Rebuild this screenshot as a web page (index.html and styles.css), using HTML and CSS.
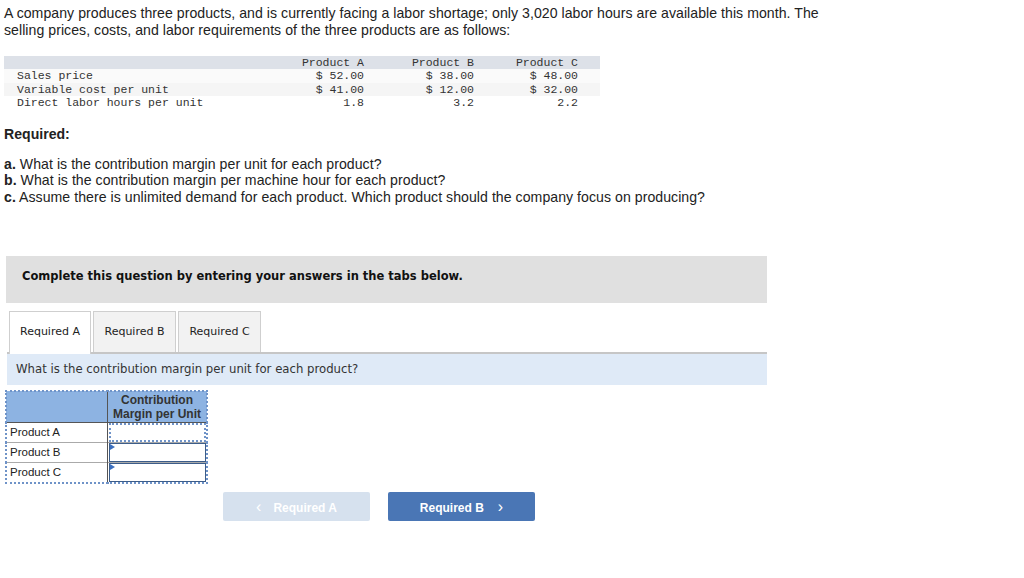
FILE: index.html
```html
<!DOCTYPE html>
<html>
<head>
<meta charset="utf-8">
<link rel="stylesheet" href="styles.css">
</head>
<body>
<p class="intro">A company produces three products, and is currently facing a labor shortage; only 3,020 labor hours are available this month. The selling prices, costs, and labor requirements of the three products are as follows:</p>

<table class="data">
  <thead>
    <tr><th class="lbl"></th><th class="ca">Product A</th><th class="cb">Product B</th><th class="cc">Product C</th></tr>
  </thead>
  <tbody>
    <tr><td class="lbl">Sales price</td><td class="ca">$ 52.00</td><td class="cb">$ 38.00</td><td class="cc">$ 48.00</td></tr>
    <tr><td class="lbl">Variable cost per unit</td><td class="ca">$ 41.00</td><td class="cb">$ 12.00</td><td class="cc">$ 32.00</td></tr>
    <tr><td class="lbl">Direct labor hours per unit</td><td class="ca">1.8</td><td class="cb">3.2</td><td class="cc">2.2</td></tr>
  </tbody>
</table>

<p class="req-title">Required:</p>
<div class="req-list">
  <p><b>a.</b> What is the contribution margin per unit for each product?</p>
  <p><b>b.</b> What is the contribution margin per machine hour for each product?</p>
  <p><b>c.</b> Assume there is unlimited demand for each product. Which product should the company focus on producing?</p>
</div>

<div class="instr">Complete this question by entering your answers in the tabs below.</div>

<div class="tabs">
  <div class="tab active">Required A</div>
  <div class="tab">Required B</div>
  <div class="tab">Required C</div>
</div>
<div class="question">What is the contribution margin per unit for each product?</div>

<table class="answer">
  <thead>
    <tr><th class="a-lbl"></th><th class="a-val">Contribution Margin per Unit</th></tr>
  </thead>
  <tbody>
    <tr><td class="a-lbl">Product A</td><td class="a-val"><div class="inp focus"></div></td></tr>
    <tr><td class="a-lbl">Product B</td><td class="a-val"><div class="inp"><span class="flag"></span></div></td></tr>
    <tr><td class="a-lbl">Product C</td><td class="a-val"><div class="inp"><span class="flag"></span></div></td></tr>
  </tbody>
</table>

<div class="nav">
  <div class="btn prev"><span class="chev">&lsaquo;</span>Required A</div>
  <div class="btn next">Required B<span class="chev right">&rsaquo;</span></div>
</div>
</body>
</html>
```

FILE: styles.css
```css
html, body {
  margin: 0;
  padding: 0;
  background: #fff;
}
body {
  padding: 0 4px;
  font-family: "Liberation Sans", Arial, sans-serif;
  color: #222;
}
p { margin: 0; }

.intro {
  font-size: 14.1px;
  letter-spacing: 0.05px;
  line-height: 16.5px;
  padding-top: 5px;
  width: 820px;
  color: #222;
}

.data {
  margin-top: 18px;
  border-collapse: collapse;
  font-family: "Liberation Mono", "Courier New", monospace;
  font-size: 11.5px;
  color: #333;
}
.data th, .data td {
  padding: 0;
  font-weight: normal;
  line-height: 13.4px;
  height: 13.4px;
}
.data thead tr { background: #dde1e8; }
.data tbody tr:nth-child(2) { background: #f5f5f5; }
.data tbody tr:nth-child(1) { background: #fafafa; }
.data .lbl { width: 273px; text-align: left; padding-left: 13px; }
.data .ca { width: 74px; text-align: right; padding-right: 11px; }
.data .cb { width: 99px; text-align: right; padding-right: 11px; }
.data .cc { width: 93px; text-align: right; padding-right: 22px; }

.req-title {
  margin-top: 16px;
  font-size: 14.1px;
  font-weight: bold;
  line-height: 16px;
}
.req-list {
  margin-top: 14px;
  font-size: 14.1px;
  letter-spacing: 0.05px;
  line-height: 16.5px;
}

.instr {
  margin: 51px 0 0 2px;
  width: 745px;
  height: 47px;
  padding-left: 16px;
  background: #e0e0e0;
  font-family: Verdana, "DejaVu Sans", sans-serif;
  font-weight: bold;
  font-size: 11.5px;
  line-height: 40px;
  color: #111;
}

.tabs {
  display: flex;
  gap: 2px;
  margin: 8px 0 0 5px;
  height: 41px;
  position: relative;
}
.tab {
  box-sizing: border-box;
  height: 41px;
  width: 83px;
  border: 1px solid #cfcfcf;
  border-bottom: none;
  background: #f2f2f2;
  font-family: Verdana, "DejaVu Sans", sans-serif;
  font-size: 11px;
  color: #222;
  text-align: center;
  line-height: 40px;
}
.tab.active {
  width: 82px;
  background: #fff;
  height: 43px;
  position: relative;
  z-index: 1;
}

.question {
  margin-left: 3px;
  width: 751px;
  border-top: 2px solid #c6c6c6;
  height: 31px;
  padding-left: 9px;
  background: #dfeaf7;
  font-family: Verdana, "DejaVu Sans", sans-serif;
  font-size: 11.7px;
  line-height: 31px;
  color: #333;
}

.answer {
  margin: 5px 0 0 1px;
  border-collapse: collapse;
  border: 2px dotted #6f93c8;
  font-family: "Liberation Sans", Arial, sans-serif;
  font-size: 11.5px;
  color: #222;
}
.answer th {
  background: #8db3e2;
  height: 30px;
  padding: 0;
  font-weight: bold;
  font-size: 12px;
  line-height: 14px;
  color: #333;
  border-bottom: 1px solid #555;
}
.answer th.a-lbl { border-right: 1px solid #555; }
.answer td {
  height: 19px;
  padding: 0;
  border-top: 1px solid #aaa;
}
.answer td.a-lbl {
  width: 97px;
  padding-left: 3px;
  border-right: 1px solid #555;
  line-height: 19px;
}
.answer .a-val { width: 98px; }
.inp {
  position: relative;
  box-sizing: border-box;
  height: 19px;
  margin: 0 0 0 1px;
  border: 1.5px solid #3c5d8a;
}
.inp.focus {
  border: 2px dotted #6f93c8;
}
.flag {
  position: absolute;
  left: 0;
  top: 0;
  width: 0;
  height: 0;
  border-top: 3px solid transparent;
  border-bottom: 3px solid transparent;
  border-left: 5px solid #3b6fbf;
}

.nav {
  display: flex;
  gap: 18px;
  margin: 8px 0 0 219px;
}
.btn {
  width: 147px;
  height: 29px;
  border-radius: 2px;
  color: #fff;
  font-family: "Liberation Sans", Arial, sans-serif;
  font-weight: bold;
  font-size: 12px;
  line-height: 29px;
  text-align: center;
}
.btn.prev { background: #d6e1ee; }
.btn.next { background: #4a76b5; }
.chev {
  font-size: 16px;
  font-weight: normal;
  margin-right: 12px;
}
.chev.right { margin: 0 0 0 14px; }
```
